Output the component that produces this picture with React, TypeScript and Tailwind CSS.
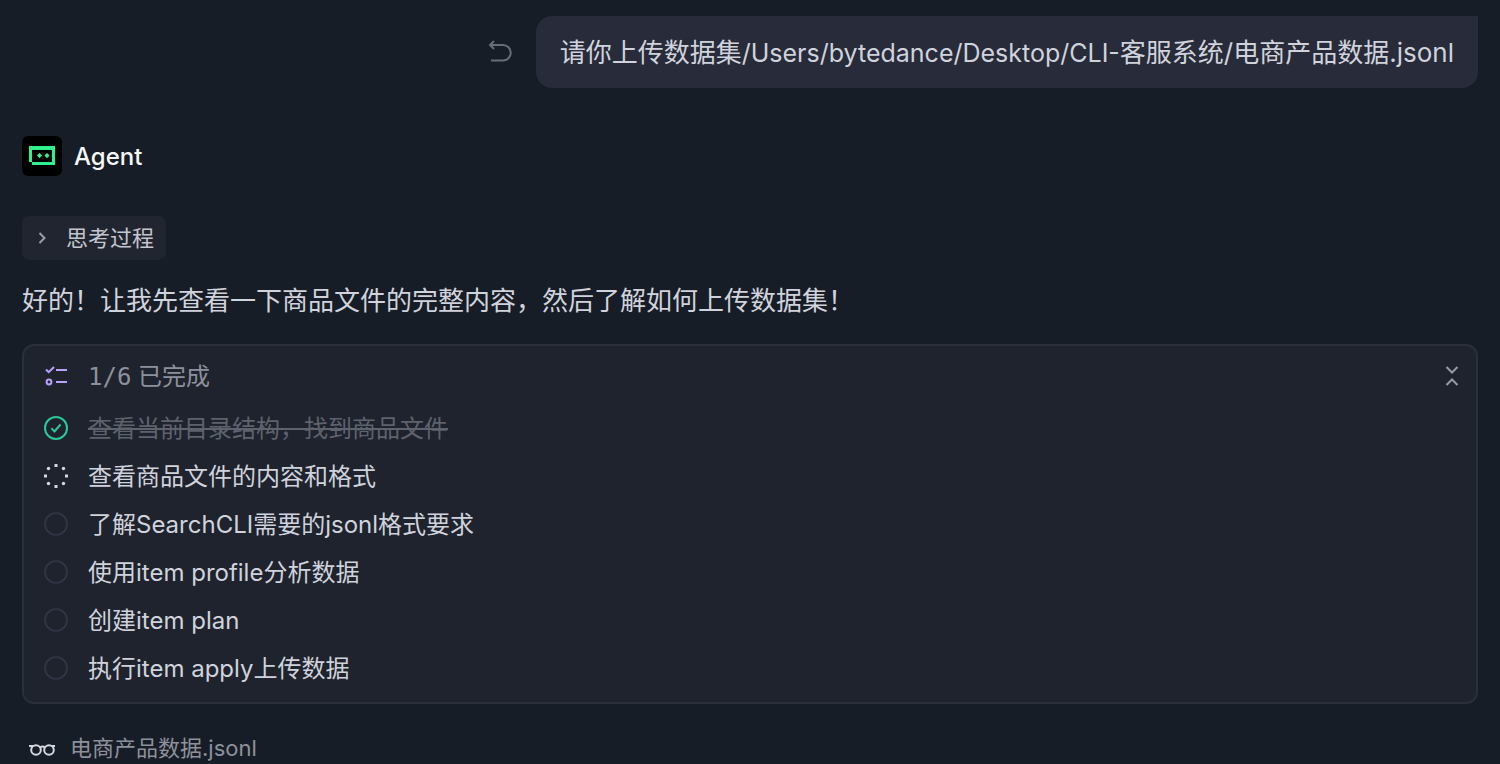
type TaskStatus = 'done' | 'running' | 'pending';

const tasks: { title: string; status: TaskStatus }[] = [
  { title: '查看当前目录结构，找到商品文件', status: 'done' },
  { title: '查看商品文件的内容和格式', status: 'running' },
  { title: '了解SearchCLI需要的jsonl格式要求', status: 'pending' },
  { title: '使用item profile分析数据', status: 'pending' },
  { title: '创建item plan', status: 'pending' },
  { title: '执行item apply上传数据', status: 'pending' },
];

function UndoIcon() {
  return (
    <svg width="24" height="24" viewBox="0 0 24 24" fill="none" stroke="currentColor" strokeWidth="2">
      <path d="M6 1 2 5l4 4" />
      <path d="M2 5h13a7.5 7.5 0 0 1 0 15.500H3" />
    </svg>
  );
}

function AgentLogo() {
  return (
    <svg width="40" height="40" viewBox="0 0 40 40" className="rounded-md bg-black" aria-hidden="true">
      <path fill="#32f08c" fillRule="evenodd" d="M7 10h26v19H10v-3H7zM10 14v12h20V14z" />
      <path fill="#32f08c" d="m17.500 17 2.600 2.600-2.600 2.600-2.600-2.600zM25 17l2.600 2.600-2.600 2.600-2.600-2.600z" />
    </svg>
  );
}

function ChecklistIcon() {
  return (
    <svg width="24" height="24" viewBox="0 0 24 24" fill="none" stroke="#b9a0fa" strokeWidth="2" aria-hidden="true">
      <path d="m2 5.500 2.700 2.700L10 3M12 6h11M12 18h11" />
      <circle cx="5" cy="18" r="2.4" />
    </svg>
  );
}

function StatusIcon({ status }: { status: TaskStatus }) {
  if (status === 'done') {
    return (
      <svg width="24" height="24" viewBox="0 0 24 24" fill="none" stroke="#2dc79a" strokeWidth="2" aria-hidden="true">
        <circle cx="12" cy="12" r="11" />
        <path d="m7.300 12.300 3.200 3.200 6-7" />
      </svg>
    );
  }
  if (status === 'running') {
    return (
      <svg width="24" height="24" viewBox="0 0 24 24" fill="#d5d8df" aria-hidden="true">
        <path d="M10.500 0h3v3h-3zM10.500 21h3v3h-3zM0 10.500h3v3H0zM21 10.500h3v3h-3z" />
        <circle cx="4.5" cy="4.5" r="1.7" />
        <circle cx="19.5" cy="4.5" r="1.7" />
        <circle cx="4.5" cy="19.5" r="1.7" />
        <circle cx="19.5" cy="19.5" r="1.7" />
      </svg>
    );
  }
  return (
    <svg width="24" height="24" viewBox="0 0 24 24" fill="none" stroke="#2e3441" strokeWidth="2" aria-hidden="true">
      <circle cx="12" cy="12" r="11" />
    </svg>
  );
}

function CollapseIcon() {
  return (
    <svg width="24" height="24" viewBox="0 0 24 24" fill="none" stroke="currentColor" strokeWidth="2">
      <path d="m6.500 3 5.500 5.500L17.500 3M6.500 21l5.500-5.500 5.500 5.500" />
    </svg>
  );
}

function GlassesIcon() {
  return (
    <svg width="28" height="24" viewBox="0 0 28 24" fill="none" stroke="#d5d8df" strokeWidth="2" aria-hidden="true">
      <circle cx="8" cy="14" r="4.8" />
      <circle cx="21" cy="14" r="4.8" />
      <path d="M12 11.500c1.500-1.300 3.500-1.300 5 0M1 10h4M24 10h3" />
    </svg>
  );
}

function UserMessage() {
  return (
    <div className="flex items-center justify-end gap-6">
      <button aria-label="撤销" className="text-[#686c75]">
        <UndoIcon />
      </button>
      <p className="rounded-2xl rounded-tr-none bg-[#272b3a] px-6 pt-[17px] pb-[15px] text-[26px] leading-10 text-[#d0d3dc]">
        请你上传数据集<span className="text-[25px]">/Users/bytedance/Desktop/CLI-</span>客服系统/电商产品数据.jsonl
      </p>
    </div>
  );
}

function TaskCard() {
  return (
    <section className="mt-[23px] rounded-xl border-2 border-[#29303b] bg-[#1e232e] px-5 pt-1.5 pb-2.5 text-2xl">
      <div className="mb-1 flex h-12 items-center gap-5 text-[#8d919b]">
        <ChecklistIcon />
        <h2 className="flex-1 pt-0.5">
          <span className="font-['DejaVu_Sans_Mono',monospace]">1/6</span> 已完成
        </h2>
        <button aria-label="收起" className="-mr-3 px-1 text-[#969aa4]">
          <CollapseIcon />
        </button>
      </div>
      <ul>
        {tasks.map((task) => (
          <li key={task.title} className="flex h-12 items-center gap-5">
            <StatusIcon status={task.status} />
            <span className={task.status === 'done' ? 'pt-0.5 text-[#5d626c] line-through' : 'pt-0.5 text-[#d0d3dc]'}>
              {task.title}
            </span>
          </li>
        ))}
      </ul>
    </section>
  );
}

export default function App() {
  return (
    <main className="min-h-screen bg-[#171d26] px-[22px] pt-4 font-['Inter','Noto_Sans_CJK_SC',sans-serif]">
      <UserMessage />

      <div className="mt-12 flex items-center gap-3">
        <AgentLogo />
        <h1 className="pt-0.5 text-2xl font-medium text-[#f5f6f8]">Agent</h1>
      </div>

      <button className="mt-10 flex h-11 items-center gap-3 rounded-lg bg-[#20252f] px-3 text-[22px] text-[#c3c6cf]">
        <svg width="20" height="20" viewBox="0 0 20 20" fill="none" stroke="#9a9ea8" strokeWidth="2" aria-hidden="true">
          <path d="m5.500 5 5 5-5 5" />
        </svg>
        <span>思考过程</span>
      </button>

      <p className="mt-[21px] text-[26px] leading-10 text-[#d0d3dc]">
        好的！让我先查看一下商品文件的完整内容，然后了解如何上传数据集！
      </p>

      <TaskCard />

      <div className="mt-7 flex h-8 items-center gap-3.5 px-1.5 text-[22px] text-[#8d919b]">
        <GlassesIcon />
        <span>电商产品数据.jsonl</span>
      </div>
    </main>
  );
}
